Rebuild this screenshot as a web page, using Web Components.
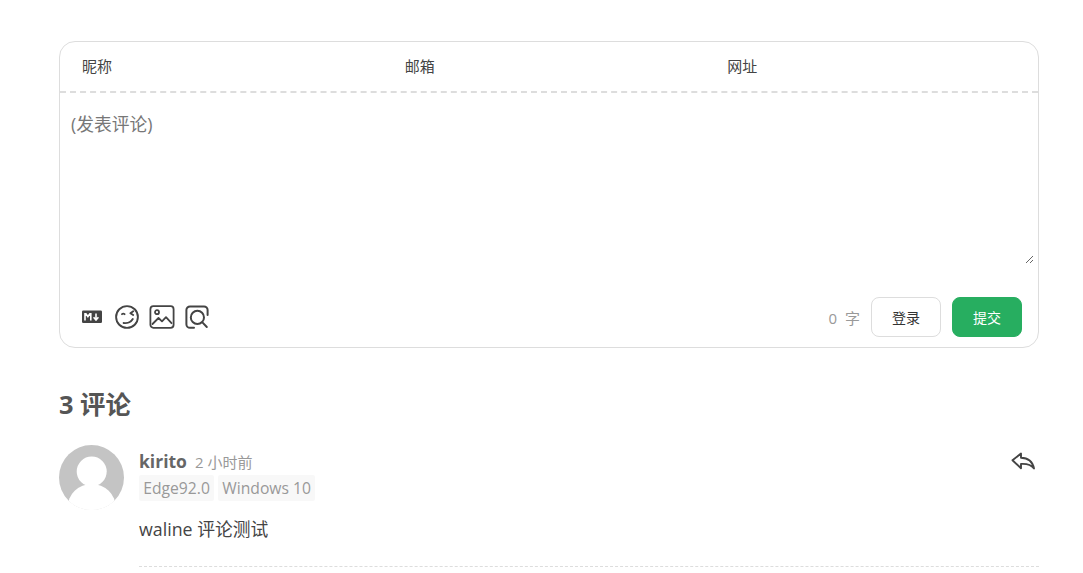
<!DOCTYPE html>
<html lang="zh">
<head>
<meta charset="utf-8">
<title>waline</title>
<style>
  html, body { margin: 0; background: #fff; overflow: hidden; }
  body { font-family: "Open Sans", "Noto Sans CJK SC", sans-serif; color: #444; }
</style>
</head>
<body>
<wl-app>
  <wl-editor></wl-editor>
  <wl-count count="3"></wl-count>
  <wl-comment nick="kirito" time="2 小时前">
    <wl-tag slot="meta">Edge92.0</wl-tag>
    <wl-tag slot="meta">Windows 10</wl-tag>
    waline 评论测试
  </wl-comment>
</wl-app>

<script>
const font = `"Open Sans", "Noto Sans CJK SC", sans-serif`;

class WlApp extends HTMLElement {
  constructor() {
    super();
    this.attachShadow({ mode: "open" }).innerHTML = `
      <style>
        :host { display: flex; flex-direction: column; width: 980px; padding: 41px 44px 0 59px; font-family: ${font}; }
      </style>
      <slot></slot>`;
  }
}

class WlField extends HTMLElement {
  constructor() {
    super();
    this.attachShadow({ mode: "open" }).innerHTML = `
      <style>
        :host { display: flex; flex: 1; align-items: center; padding: 0 0 2px 22px; font-size: 15px; color: #444; }
        input { flex: 1; min-width: 0; border: 0; outline: 0; background: none; font: inherit; margin-left: 8px; }
      </style>
      <label><slot></slot></label><input type="text">`;
  }
}

class WlEditor extends HTMLElement {
  constructor() {
    super();
    this.attachShadow({ mode: "open" }).innerHTML = `
      <style>
        :host { display: block; box-sizing: border-box; height: 307px; border: 1px solid #ddd; border-radius: 16px; overflow: hidden; }
        header { display: flex; height: 49px; border-bottom: 2px dashed #ddd; padding-right: 10px; }
        textarea {
          display: block; box-sizing: border-box; width: 974px; height: 171px; margin: 0;
          padding: 18px 11px; border: 0; outline: 0; background: none; resize: vertical;
          font: 17.8px/26px ${font}; color: #444;
        }
        textarea::placeholder { color: #777; opacity: 1; }
        footer { display: flex; align-items: center; justify-content: space-between; padding: 33px 16px 0 21px; }
        .tools { display: flex; align-items: center; gap: 10px; }
        .tools svg { display: block; }
        .actions { display: flex; align-items: center; }
        .count { font-size: 15px; color: #999; margin-right: 11px; word-spacing: 4px; }
        button {
          box-sizing: border-box; width: 70px; height: 40px; border-radius: 8px; border: 1px solid #ddd;
          background: #fff; color: #333; font: 14px ${font}; padding: 0;
        }
        button.primary { margin-left: 11px; background: #27ae60; border-color: #27ae60; color: #fff; }
      </style>
      <header>
        <wl-field>昵称</wl-field>
        <wl-field>邮箱</wl-field>
        <wl-field>网址</wl-field>
      </header>
      <textarea placeholder="(发表评论)"></textarea>
      <footer>
        <div class="tools">
          <svg width="24" height="24" viewBox="0 0 24 24">
            <rect x="1" y="5.500" width="20" height="12.500" rx="1.200" fill="#444"/>
            <path d="M4 15.500V8.700h.9l2 2.800 2-2.800h.9v6.800M15 8.500v6M12.600 12.300l2.400 2.700 2.400-2.700" fill="none" stroke="#fff" stroke-width="1.600"/>
          </svg>
          <svg width="24" height="24" viewBox="0 0 24 24" fill="none" stroke="#444" stroke-width="1.9" stroke-linecap="round" stroke-linejoin="round">
            <circle cx="12" cy="12" r="10.900"/>
            <path d="M7 9.200c.8-.8 1.800-.8 2.600 0M18.200 6.200l-2.800 2 2.800 1.800M8.600 18c3.400.6 7.400-.8 9.200-4"/>
          </svg>
          <svg width="26" height="24" viewBox="0 0 26 24" fill="none" stroke="#444" stroke-width="1.800" stroke-linejoin="round" stroke-linecap="round">
            <rect x="1.400" y="1.200" width="23.200" height="21.600" rx="3"/>
            <circle cx="8" cy="7.200" r="2"/>
            <path d="M3.500 19l6-6 3.500 3.400 4-4.200 5.500 6"/>
          </svg>
          <svg width="24" height="24" viewBox="0 0 24 24" fill="none" stroke="#444" stroke-width="2" stroke-linecap="round">
            <path d="M9 22.800H5a3.600 3.600 0 0 1-3.600-3.600V5A3.600 3.600 0 0 1 5 1.400h14A3.600 3.600 0 0 1 22.600 5v5"/>
            <circle cx="12.400" cy="12.400" r="6.600"/>
            <path d="M17.400 17.400l4.400 4.600"/>
          </svg>
        </div>
        <div class="actions">
          <span class="count">0 字</span>
          <button>登录</button>
          <button class="primary">提交</button>
        </div>
      </footer>`;
  }
}

class WlCount extends HTMLElement {
  constructor() {
    super();
    this.attachShadow({ mode: "open" }).innerHTML = `
      <style>
        :host { display: block; margin-top: 39px; font-size: 25.4px; line-height: 34px; font-weight: 700; color: #555; }
      </style>
      ${this.getAttribute("count")} 评论`;
  }
}

class WlTag extends HTMLElement {
  constructor() {
    super();
    this.attachShadow({ mode: "open" }).innerHTML = `
      <style>
        :host { display: inline-block; padding: 0 4.2px; height: 26px; line-height: 26px; font-size: 15.7px; color: #999; background: #f8f8f8; border-radius: 2px; }
      </style>
      <slot></slot>`;
  }
}

class WlComment extends HTMLElement {
  constructor() {
    super();
    this.attachShadow({ mode: "open" }).innerHTML = `
      <style>
        :host { display: flex; margin-top: 24px; }
        .avatar { flex: none; display: block; margin-right: 15px; }
        .body { flex: 1; min-width: 0; position: relative; }
        .head { display: flex; align-items: baseline; height: 29px; margin-top: 1px; line-height: 30px; }
        .nick { font-size: 17.5px; font-weight: 700; color: #666; margin-right: 8px; }
        .time { font-size: 15px; color: #999; }
        .meta { display: flex; gap: 4px; }
        .content { margin-top: 15px; padding-bottom: 24px; font-size: 17.8px; line-height: 26px; color: #444; border-bottom: 1px dashed #ddd; }
        .reply { position: absolute; top: 6px; right: 3px; }
      </style>
      <svg class="avatar" width="65" height="65" viewBox="0 0 65 65">
        <clipPath id="c"><circle cx="32.5" cy="32.5" r="32.5"/></clipPath>
        <g clip-path="url(#c)">
          <rect width="65" height="65" fill="#c4c4c4"/>
          <circle cx="32.7" cy="26.5" r="15" fill="#fff"/>
          <ellipse cx="32.7" cy="62" rx="24" ry="23" fill="#fff"/>
          <rect y="56" width="65" height="9" fill="#fff"/>
        </g>
      </svg>
      <div class="body">
        <div class="head"><span class="nick">${this.getAttribute("nick")}</span><span class="time">${this.getAttribute("time")}</span></div>
        <div class="meta"><slot name="meta"></slot></div>
        <div class="content"><slot></slot></div>
        <svg class="reply" width="25" height="20" viewBox="0 0 25 20" fill="none" stroke="#444" stroke-width="1.9" stroke-linejoin="round">
          <path d="M1.5 9.2L10 2.5v4.2c7 0 11.5 3.5 13 10.8-2.6-3.600-6-5-13-4.600v4.400z"/>
        </svg>
      </div>`;
  }
}

customElements.define("wl-app", WlApp);
customElements.define("wl-field", WlField);
customElements.define("wl-editor", WlEditor);
customElements.define("wl-count", WlCount);
customElements.define("wl-tag", WlTag);
customElements.define("wl-comment", WlComment);
</script>
</body>
</html>
